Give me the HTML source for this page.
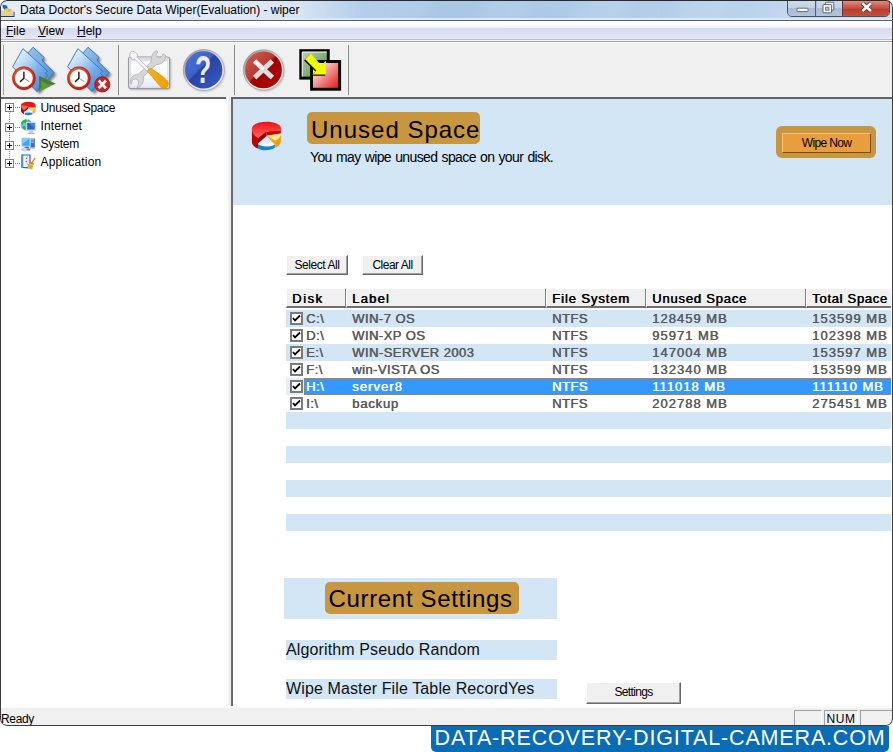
<!DOCTYPE html>
<html><head><meta charset="utf-8"><title>Data Doctor's Secure Data Wiper</title>
<style>
*{box-sizing:border-box;margin:0;padding:0}
html,body{width:893px;height:752px;overflow:hidden;background:#fff;font-family:"Liberation Sans",sans-serif;}
.abs{position:absolute}
#win{position:absolute;left:0;top:0;width:893px;height:726px;background:#f0f0f0;border-radius:7px 7px 7px 7px;overflow:hidden}
#frame{position:absolute;left:0;top:0;width:893px;height:726px;border:1px solid #3c3c3c;border-radius:7px;border-top-color:#2a2a2a;pointer-events:none;z-index:50}
#title{left:0;top:0;width:893px;height:20px;background:linear-gradient(#fff0 0,#fff0 18px,#dbe8f5 18px,#dbe8f5 20px),linear-gradient(90deg,#e4edf7 0,#dfe9f5 240px,#d6e4f3 300px,#b4cfeb 360px,rgba(180,207,235,0) 420px),repeating-linear-gradient(115deg,rgba(255,255,255,.08) 0 24px,rgba(255,255,255,0) 40px 70px,rgba(255,255,255,.08) 90px),linear-gradient(90deg,#aac9e7 0,#a9c8e6 55%,#b3cfea 75%,#c8dcf1 100%);}
#title .t{position:absolute;left:20px;letter-spacing:-.02px;top:3px;font-size:12px;color:#000;white-space:nowrap;line-height:14px}
#titleline{left:0;top:20px;width:893px;height:1px;background:#5a6068}
#menu{left:1px;top:21px;width:891px;height:20px;background:linear-gradient(#fff 0,#fff 14%,#eef1fa 34%,#d8dcf0 36%,#dbdff2 60%,#e6e8f7 89%,#b9bdd0 90%,#b9bdd0 95%,#f5f5f7 95%)}
#menu span{position:absolute;top:3px;font-size:12px;line-height:14px;color:#000}
#menu u{text-decoration:underline}
#menuline{left:1px;top:41px;width:891px;height:1px;background:#a0a0a0}
#tb{left:1px;top:42px;width:891px;height:55px;background:#f0f0f0;border-top:1px solid #fbfbfb}
#tbline{left:1px;top:97px;width:891px;height:2px;background:#646464;z-index:2}
#tree{left:1px;top:98px;width:225px;height:608px;background:#fff}
#split{z-index:3;left:226px;top:96px;width:5px;height:610px;background:linear-gradient(90deg,#f5f5f5 0 1px,#fff 1px 2px,#f0f0f0 2px)}
#rp{left:231px;top:98px;width:661px;height:608px;background:#fff;border-left:2px solid #6a6a6a}
#hdr{left:233px;top:99px;width:659px;height:106px;background:#d2e6f6}
.badge{background:#c99640;border-radius:5px;color:#000;font-size:24px;white-space:nowrap}
.tree-t{position:absolute;left:39.5px;font-size:12px;line-height:14px;color:#000;white-space:nowrap}
.btn{position:absolute;background:#f0f0f0;border:1px solid;border-color:#fff #696969 #696969 #fff;box-shadow:inset -1px -1px 0 #a0a0a0;font-size:11px;text-align:center;color:#000;white-space:nowrap}
.stripe{position:absolute;left:286px;width:605px;height:17px;background:#d2e6f6}
.row{position:absolute;left:286px;width:605px;height:17px;font-size:13px;font-weight:normal;text-shadow:.6px 0 0 currentColor;color:#5a5a5a;line-height:17px;letter-spacing:.45px;white-space:nowrap}
.row span{position:absolute;top:0}
.hc{position:absolute;top:289px;height:19px;background:#f0f0f0;border-left:1px solid #fff;border-right:1px solid #808080;border-bottom:2px solid #707070;font-size:13px;font-weight:normal;text-shadow:.6px 0 0 currentColor;color:#000;line-height:19px;letter-spacing:.9px;white-space:nowrap;padding-left:5px;overflow:hidden}
.cb{position:absolute;left:4px;top:2px;width:13px;height:13px;background:#fff;border:2px solid #7b7b7b;}
.cb svg{position:absolute;left:0;top:0}
.pm{position:absolute;left:4px;width:9px;height:9px;border:1px solid #808080;background:#fff}
.pm:before{content:"";position:absolute;left:1px;top:3px;width:5px;height:1px;background:#000}
.pm:after{content:"";position:absolute;left:3px;top:1px;width:1px;height:5px;background:#000}
.vd{position:absolute;left:8px;width:1px;background:repeating-linear-gradient(#808080 0 1px,transparent 1px 2px)}
.hd{position:absolute;left:14px;width:6px;height:1px;background:repeating-linear-gradient(90deg,#808080 0 1px,transparent 1px 2px)}
.lbl{position:absolute;left:286px;width:271px;height:20px;background:#d2e6f6;font-size:16px;line-height:20px;color:#111;letter-spacing:.12px;white-space:nowrap}
.sp{position:absolute;top:710px;height:16px;border:1px solid;border-color:#a0a0a0 #fff #fff #a0a0a0}
</style></head><body>
<div id="win">
<div id="title" class="abs"><span class="t">Data Doctor's Secure Data Wiper(Evaluation) - wiper</span></div>
<div id="titleline" class="abs"></div>
<div id="menu" class="abs"><span style="left:5px"><u>F</u>ile</span><span style="left:37px"><u>V</u>iew</span><span style="left:76px"><u>H</u>elp</span></div>
<div id="menuline" class="abs"></div>
<div id="tb" class="abs"></div>
<div id="tbline" class="abs"></div>
<div id="tree" class="abs">
  <div class="pm" style="top:5px"></div><div class="pm" style="top:25px"></div><div class="pm" style="top:43px"></div><div class="pm" style="top:61px"></div><div class="vd" style="top:15px;height:10px"></div><div class="vd" style="top:35px;height:8px"></div><div class="vd" style="top:53px;height:8px"></div><div class="hd" style="top:9px"></div><div class="hd" style="top:29px"></div><div class="hd" style="top:47px"></div><div class="hd" style="top:65px"></div>
  <div class="tree-t" style="top:3px;letter-spacing:-.35px">Unused Space</div>
  <div class="tree-t" style="top:21px;letter-spacing:.1px">Internet</div>
  <div class="tree-t" style="top:39px;letter-spacing:-.25px">System</div>
  <div class="tree-t" style="top:57px;letter-spacing:.2px">Application</div>
</div>
<div id="split" class="abs"></div>
<div id="rp" class="abs"></div>
<div id="hdr" class="abs"></div>
<div class="abs badge" style="left:307px;top:112px;width:173px;height:32px;line-height:35px;padding-left:4px;letter-spacing:1px">Unused Space</div>
<div class="abs" id="sub" style="left:310px;top:149px;font-size:14px;line-height:16px;white-space:nowrap;color:#000;letter-spacing:-.62px;word-spacing:.9px">You may wipe unused space on your disk.</div>
<div class="abs" style="left:776px;top:126px;width:100px;height:32px;border-radius:6px;background:#c99640"></div>
<div class="abs" id="wipenow" style="left:782px;top:133px;width:89px;height:20px;background:#e99d3c;border:1px solid;border-color:#f3c27a #7a4c10 #7a4c10 #f3c27a;font-size:12px;letter-spacing:-.64px;line-height:18px;text-align:center">Wipe Now</div>

<div class="btn" id="selall" style="left:286px;top:255px;width:62px;height:20px;line-height:18px;font-size:12px;letter-spacing:-.45px">Select All</div>
<div class="btn" id="clrall" style="left:362px;top:255px;width:61px;height:20px;line-height:18px;font-size:12px;letter-spacing:-.5px">Clear All</div>

<div class="abs" style="left:286px;top:288px;width:605px;height:1px;background:#fff"></div>
<div class="hc" style="left:286px;width:60px;letter-spacing:1.5px">Disk</div>
<div class="hc" style="left:346px;width:200px;letter-spacing:1.2px">Label</div>
<div class="hc" style="left:546px;width:100px">File System</div>
<div class="hc" style="left:646px;width:160px;letter-spacing:.8px">Unused Space</div>
<div class="hc" style="left:806px;width:85px;border-right:none;letter-spacing:.7px">Total Space</div>

<div class="stripe" style="top:310px"></div>
<div class="stripe" style="top:344px"></div>
<div class="stripe" style="top:378px;background:#e2eefa"></div><div class="abs" style="left:304px;top:378px;width:587px;height:17px;background:#3399ff;border:1px dotted #c8793a;border-right:none"></div>
<div class="stripe" style="top:412px"></div>
<div class="stripe" style="top:446px"></div>
<div class="stripe" style="top:480px"></div>
<div class="stripe" style="top:514px"></div>
<div class="row" style="top:310px"><i class="cb"><svg width="9" height="9" viewBox="0 0 9 9"><path d="M1 4 L3 6.5 L8 1.5" stroke="#000" stroke-width="1.8" fill="none"/></svg></i><span style="left:20px">C:\</span><span style="left:66px">WIN-7 OS</span><span style="left:266px">NTFS</span><span style="left:366px;letter-spacing:1px">128459 MB</span><span style="left:526px;letter-spacing:1px">153599 MB</span></div>
<div class="row" style="top:327px"><i class="cb"><svg width="9" height="9" viewBox="0 0 9 9"><path d="M1 4 L3 6.5 L8 1.5" stroke="#000" stroke-width="1.8" fill="none"/></svg></i><span style="left:20px">D:\</span><span style="left:66px">WIN-XP OS</span><span style="left:266px">NTFS</span><span style="left:366px;letter-spacing:1px">95971 MB</span><span style="left:526px;letter-spacing:1px">102398 MB</span></div>
<div class="row" style="top:344px"><i class="cb"><svg width="9" height="9" viewBox="0 0 9 9"><path d="M1 4 L3 6.5 L8 1.5" stroke="#000" stroke-width="1.8" fill="none"/></svg></i><span style="left:20px">E:\</span><span style="left:66px">WIN-SERVER 2003</span><span style="left:266px">NTFS</span><span style="left:366px;letter-spacing:1px">147004 MB</span><span style="left:526px;letter-spacing:1px">153597 MB</span></div>
<div class="row" style="top:361px"><i class="cb"><svg width="9" height="9" viewBox="0 0 9 9"><path d="M1 4 L3 6.5 L8 1.5" stroke="#000" stroke-width="1.8" fill="none"/></svg></i><span style="left:20px">F:\</span><span style="left:66px;letter-spacing:.45px">win-VISTA OS</span><span style="left:266px">NTFS</span><span style="left:366px;letter-spacing:1px">132340 MB</span><span style="left:526px;letter-spacing:1px">153599 MB</span></div>
<div class="row" style="top:378px;color:#fff"><i class="cb"><svg width="9" height="9" viewBox="0 0 9 9"><path d="M1 4 L3 6.5 L8 1.5" stroke="#000" stroke-width="1.8" fill="none"/></svg></i><span style="left:20px">H:\</span><span style="left:66px;letter-spacing:1.05px">server8</span><span style="left:266px">NTFS</span><span style="left:366px;letter-spacing:1px">111018 MB</span><span style="left:526px;letter-spacing:1px">111110 MB</span></div>
<div class="row" style="top:395px"><i class="cb"><svg width="9" height="9" viewBox="0 0 9 9"><path d="M1 4 L3 6.5 L8 1.5" stroke="#000" stroke-width="1.8" fill="none"/></svg></i><span style="left:20px">I:\</span><span style="left:66px;letter-spacing:.8px">backup</span><span style="left:266px">NTFS</span><span style="left:366px;letter-spacing:1px">202788 MB</span><span style="left:526px;letter-spacing:1px">275451 MB</span></div>
<div class="abs" style="left:284px;top:578px;width:273px;height:41px;background:#d2e6f6"></div>
<div class="abs badge" style="left:325px;top:582px;width:194px;height:32px;line-height:33px;padding-left:3.5px;letter-spacing:.67px">Current Settings</div>
<div class="lbl" id="l1" style="top:640px">Algorithm Pseudo Random</div>
<div class="lbl" id="l2" style="top:679px">Wipe Master File Table RecordYes</div>
<div class="btn" id="setbtn" style="left:586px;top:682px;width:95px;height:22px;line-height:18px;font-size:12px;letter-spacing:-.64px">Settings</div>

<div class="abs" style="left:1px;top:706px;width:891px;height:2px;background:#fafafa"></div>
<div class="abs" id="ready" style="left:1px;top:712px;font-size:12px;line-height:14px;letter-spacing:-.35px">Ready</div>
<div class="sp" style="left:794px;width:28px"></div>
<div class="sp" style="left:824px;width:34px;font-size:12px;line-height:17px;padding-left:1.5px;letter-spacing:.6px;overflow:visible;white-space:nowrap">NUM</div>
<div class="sp" style="left:860px;width:32px;border-right:none"></div>
<!--ICONS--><svg width="0" height="0" style="position:absolute"><defs>
<linearGradient id="gF" x1=".15" y1=".1" x2=".85" y2=".95"><stop offset="0" stop-color="#e4f2fd"/><stop offset=".3" stop-color="#b4d6f6"/><stop offset=".6" stop-color="#76b0ec"/><stop offset="1" stop-color="#4a8ad2"/></linearGradient>
<linearGradient id="gB" x1="0" y1="0" x2="1" y2="1"><stop offset="0" stop-color="#9cc6f0"/><stop offset=".5" stop-color="#6fa6e2"/><stop offset="1" stop-color="#4c86cc"/></linearGradient>
<radialGradient id="gRing" cx=".4" cy=".35" r=".7"><stop offset="0" stop-color="#ff7a4a"/><stop offset="1" stop-color="#c81e10"/></radialGradient>
<radialGradient id="gFace" cx=".5" cy=".5" r=".5"><stop offset="0" stop-color="#ffffff"/><stop offset=".8" stop-color="#ffffff"/><stop offset="1" stop-color="#e4e4e4"/></radialGradient>
<linearGradient id="gQ" x1="0" y1="0" x2="1" y2="1"><stop offset="0" stop-color="#4f74dc"/><stop offset=".42" stop-color="#3f60c8"/><stop offset=".46" stop-color="#2743a4"/><stop offset="1" stop-color="#3c5ec6"/></linearGradient>
<linearGradient id="gX" x1="0" y1="0" x2="1" y2="1"><stop offset="0" stop-color="#d86050"/><stop offset=".45" stop-color="#b83a34"/><stop offset=".5" stop-color="#a40000"/><stop offset="1" stop-color="#b00808"/></linearGradient>
<linearGradient id="gSil" x1="0" y1="0" x2="1" y2="1"><stop offset="0" stop-color="#8c8c8c"/><stop offset=".5" stop-color="#d8d8d8"/><stop offset="1" stop-color="#ffffff"/></linearGradient>
<linearGradient id="gGr" x1="0" y1="0" x2="1" y2="1"><stop offset="0" stop-color="#c4c8c4"/><stop offset=".5" stop-color="#86b078"/><stop offset="1" stop-color="#4c9428"/></linearGradient>
<linearGradient id="gRd" x1="0" y1="0" x2="1" y2="1"><stop offset="0" stop-color="#ffffff"/><stop offset=".4" stop-color="#f4a8a8"/><stop offset=".8" stop-color="#ea4848"/><stop offset="1" stop-color="#ff1010"/></linearGradient>
<linearGradient id="gWin" x1="0" y1="0" x2="0" y2="1"><stop offset="0" stop-color="#ffffff"/><stop offset=".6" stop-color="#f6f8fc"/><stop offset="1" stop-color="#e4e9f4"/></linearGradient>
<linearGradient id="gOr" x1="0" y1="0" x2="1" y2="0"><stop offset="0" stop-color="#f6b020"/><stop offset="1" stop-color="#f0a000"/></linearGradient>
<filter id="bl" x="-30%" y="-30%" width="160%" height="160%"><feGaussianBlur stdDeviation="1.1"/></filter>
</defs></svg>
<!-- toolbar icons -->
<svg class="abs" style="left:8px;top:44px" width="52" height="52" viewBox="0 0 52 52"><g>
  <path d="M6 24 L16 6 L21 10 L26 4.5 L37 14.5 L35 17.5 L47.5 29.5 L30.5 49 Z" fill="#333" opacity=".55" filter="url(#bl)" transform="translate(1.2,1.2)"/>
  <path d="M20 9 L25 3.2 L36.2 13.4 L34 16.4 L46.4 28.7 L36 40 Z" fill="url(#gB)" stroke="#3a6fb2" stroke-width=".9"/>
  <path d="M4.6 22.8 L14.9 4.6 L39.5 27 L37.5 29 L39.5 31.5 L29 47.6 Z" fill="url(#gF)" stroke="#3a6fb2" stroke-width=".9" stroke-linejoin="round"/>
  <circle cx="16.6" cy="35" r="11" fill="#555" opacity=".35" filter="url(#bl)"/>
  <circle cx="15.9" cy="34.2" r="10.2" fill="url(#gFace)" stroke="url(#gRing)" stroke-width="2.6"/>
  <circle cx="15.9" cy="34.2" r="11.4" fill="none" stroke="#a81808" stroke-width=".6"/>
  <path d="M15.9 34.4 L15.9 28.2 M15.9 34.2 L12.4 37.6" stroke="#111" stroke-width="1.4" fill="none" stroke-linecap="round"/>
  <path d="M15.9 34.2 L21.4 37.6" stroke="#e04040" stroke-width=".7"/>
</g>
  <path d="M31 32 L47.8 39.8 L31 47.8 Z" fill="#5c9a3c"/><path d="M31 32 L47.8 39.8 L40 40.5 L33 36.5 L33.5 43 L31 47.8 Z" fill="#44702c" opacity=".75"/>
</svg>
<svg class="abs" style="left:63px;top:44px" width="52" height="52" viewBox="0 0 52 52"><g>
  <path d="M6 24 L16 6 L21 10 L26 4.5 L37 14.5 L35 17.5 L47.5 29.5 L30.5 49 Z" fill="#333" opacity=".55" filter="url(#bl)" transform="translate(1.2,1.2)"/>
  <path d="M20 9 L25 3.2 L36.2 13.4 L34 16.4 L46.4 28.7 L36 40 Z" fill="url(#gB)" stroke="#3a6fb2" stroke-width=".9"/>
  <path d="M4.6 22.8 L14.9 4.6 L39.5 27 L37.5 29 L39.5 31.5 L29 47.6 Z" fill="url(#gF)" stroke="#3a6fb2" stroke-width=".9" stroke-linejoin="round"/>
  <circle cx="16.6" cy="35" r="11" fill="#555" opacity=".35" filter="url(#bl)"/>
  <circle cx="15.9" cy="34.2" r="10.2" fill="url(#gFace)" stroke="url(#gRing)" stroke-width="2.6"/>
  <circle cx="15.9" cy="34.2" r="11.4" fill="none" stroke="#a81808" stroke-width=".6"/>
  <path d="M15.9 34.4 L15.9 28.2 M15.9 34.2 L12.4 37.6" stroke="#111" stroke-width="1.4" fill="none" stroke-linecap="round"/>
  <path d="M15.9 34.2 L21.4 37.6" stroke="#e04040" stroke-width=".7"/>
</g>
  <circle cx="39.3" cy="40.4" r="7.6" fill="#c42424" stroke="#8c1010" stroke-width=".8"/>
  <path d="M35.6 36.6 L43 44.2 M43 36.6 L35.6 44.2" stroke="#f4f4f4" stroke-width="2.8"/>
</svg>
<svg class="abs" style="left:120px;top:44px" width="60" height="52" viewBox="0 0 60 52">
  <rect x="9.2" y="14" width="41.6" height="31.8" rx="2.5" fill="#777" opacity=".5" filter="url(#bl)"/>
  <rect x="8.6" y="13" width="41" height="31.6" rx="2.5" fill="url(#gWin)" stroke="#9a9a9a" stroke-width="1.2"/>
  <rect x="9.6" y="14" width="39" height="2.2" fill="#d6deee"/>
  <rect x="10.3" y="16.8" width="37.6" height="26.4" fill="none" stroke="#d3dbee" stroke-width="1"/>
  <!-- wrench -->
  <path d="M10.5 39.5 C9.5 34 13 30.5 18.5 30 L31 18 C31 12 33 8 36.5 6.5 L37.8 8 C35 11.5 36 13.5 39.5 13.5 C42 13.5 42.5 11.5 43 9.8 L45.5 11.5 C45.5 17 42 20.5 36 20.8 L23.5 32.5 C24 37.5 22 41.5 18.8 43.4 L17 43.4 C19.5 39 19 35.4 15.5 35 C12.5 34.8 11.6 37.2 11.6 40 Z" fill="#d6d6d6" stroke="#b0b0b0" stroke-width=".8"/>
  <!-- screwdriver -->
  <path d="M10.2 9 C10.6 7.4 12.6 6.6 14 7.6 L17.6 10.6 L17 13 L30 25.8 L27.8 28 L14.8 15.2 L12.6 15.6 L9.8 12 Z" fill="#f6f6f6" stroke="#b4b4b4" stroke-width=".8"/>
  <path d="M27.4 27.4 C28 25 30 24 31.5 24.6 C35 27.4 42 31.5 46.6 36 C49.2 38.6 48.8 41.8 46.6 43.6 C44.6 45 42 44.8 40.2 42.6 C36.5 37.5 32 32.5 27.4 27.4 Z" fill="url(#gOr)" stroke="#d88a00" stroke-width=".6"/>
</svg>
<svg class="abs" style="left:176px;top:44px" width="56" height="52" viewBox="0 0 56 52">
  <circle cx="28.6" cy="26.9" r="20.3" fill="#666" opacity=".5" filter="url(#bl)"/>
  <circle cx="27.7" cy="25.9" r="19.6" fill="url(#gQ)" stroke="url(#gSil)" stroke-width="1.8"/>
  <circle cx="27.7" cy="25.9" r="20.5" fill="none" stroke="#8a8a8a" stroke-width=".5"/>
  <text x="0" y="38.8" transform="translate(27.2,0) scale(.7,1)" font-family="Liberation Sans,sans-serif" font-weight="bold" font-size="38" fill="#ececec" text-anchor="middle">?</text>
</svg>
<svg class="abs" style="left:236px;top:44px" width="56" height="52" viewBox="0 0 56 52">
  <circle cx="28.4" cy="26.9" r="20" fill="#666" opacity=".5" filter="url(#bl)"/>
  <circle cx="27.5" cy="25.9" r="19.3" fill="url(#gX)" stroke="url(#gSil)" stroke-width="1.8"/>
  <circle cx="27.5" cy="25.9" r="20.2" fill="none" stroke="#8a8a8a" stroke-width=".5"/>
  <path d="M18.6 17 L36.4 33.6 M36.4 17 L18.6 33.6" stroke="#dcdcdc" stroke-width="5" />
  <path d="M18.6 17 L27.5 25.3" stroke="#f8f8f8" stroke-width="3"/>
</svg>
<svg class="abs" style="left:292px;top:44px" width="56" height="52" viewBox="0 0 56 52">
  <rect x="7.3" y="5.2" width="30.4" height="30.4" fill="#000"/>
  <rect x="10.2" y="8" width="24.6" height="24.6" fill="url(#gGr)"/>
  <path d="M10.2 32.6 V8 H34.8" fill="none" stroke="#fff" stroke-width="1"/>
  <rect x="18.1" y="16" width="31" height="30.7" fill="#000"/>
  <rect x="21" y="19" width="25.2" height="24.8" fill="url(#gRd)"/>
  <path d="M12.6 15.6 L18.6 9.8 L29.2 21.4 L33.9 16.9 V31 H19.6 L24 26.8 Z" fill="#111" transform="translate(-.6,.8)"/>
  <path d="M13.2 15.2 L18.8 9.8 L29.2 21.2 L33.9 16.9 V30.4 H20.4 L24.4 26.6 Z" fill="#f0ff00"/>
</svg>
<!-- toolbar separators/grip -->
<div class="abs" style="left:3px;top:45px;width:1px;height:50px;background:#a0a0a0"></div>
<div class="abs" style="left:118px;top:45px;width:1px;height:50px;background:#8c8c8c"></div>
<div class="abs" style="left:234px;top:45px;width:1px;height:50px;background:#8c8c8c"></div>
<div class="abs" style="left:348px;top:45px;width:1px;height:50px;background:#8c8c8c"></div>
<!-- pie icon -->
<svg class="abs" style="left:240px;top:110px" width="52" height="52" viewBox="0 0 52 52">
  <defs><linearGradient id="gPt" x1="0" y1="0" x2="0" y2="1"><stop offset="0" stop-color="#ee1010"/><stop offset=".5" stop-color="#fa3a3a"/><stop offset="1" stop-color="#ee6a6a"/></linearGradient>
  <linearGradient id="gPy" x1="0" y1="0" x2="1" y2="1"><stop offset="0" stop-color="#f4c010"/><stop offset=".6" stop-color="#fff6a0"/><stop offset="1" stop-color="#f4c818"/></linearGradient>
  <linearGradient id="gPb" x1="0" y1="0" x2="0" y2="1"><stop offset="0" stop-color="#bfe4f6"/><stop offset="1" stop-color="#ffffff"/></linearGradient></defs>
  <path d="M11.9 18 V33 C13 36 15.5 37.6 18 38.6 V28 L26.4 21.6 Z" fill="#c00404"/>
  <path d="M18 27.8 L26.6 21.2 V26 L18 33.6 Z" fill="#9c0000"/>
  <path d="M26.5 21.8 L40.9 18.6 V23.6 L26.5 25.8 Z" fill="#c40808"/>
  <path d="M11.9 18.6 C11.9 9.5 41 9.5 41 18.6 C41 20 40.8 20.6 40.6 21 L26.6 21.4 L18 27.9 C14 26.4 11.9 22 11.9 18.6 Z" fill="url(#gPt)"/>
  <path d="M26.6 25.7 L40.9 23.6 C41 27 39 29.5 35.2 30.6 Z" fill="url(#gPy)"/>
  <path d="M35.2 30.6 C39 29.5 41 27 40.9 23.6 V31 C40.6 34 38.6 36.4 35.2 37.8 Z" fill="#f29a10"/>
  <path d="M26.6 25.7 L35.2 30.6 V37.8 L34.6 34.4 Z" fill="#f0a818"/>
  <path d="M18 34 C22 37 31 37 34.9 34.5 V37.6 C31 41 22 41 18 38.4 Z" fill="#1a86c8"/>
  <path d="M26.6 27.6 L34.9 34.5 C31 37 22 37 18 34 Z" fill="url(#gPb)"/>
</svg>
<!--/ICONS--><!--CAP--><!-- title icon -->
<svg class="abs" style="left:0;top:3px" width="17" height="16" viewBox="0 0 17 16">
  <path d="M1 7.6 H13.4 L14.4 9 V13.4 H1 Z" fill="#d0d0d0"/>
  <path d="M1 13 H14.4 V14 H1 Z" fill="#3a3a3a"/>
  <path d="M13.6 8.4 L14.6 9.6 V13.4 H13.6 Z" fill="#555"/>
  <path d="M5.6 4.4 L12 6.8 L6.4 12.9 L3.8 9 Z" fill="#f2d840"/>
  <path d="M8.6 5.6 L11.6 6.8 L9.2 9.6 L7.4 7.6 Z" fill="#f6b060"/>
  <path d="M2.6 1.8 L6.6 2.4 L7.8 4.4 L4 6.2 L2.8 4.4 Z" fill="#1f5cc4"/>
  <path d="M4 6.2 L7.8 4.4 L8.4 5.2 L4.4 7.2 Z" fill="#7aa0d8"/>
</svg>
<!-- caption buttons -->
<div class="abs" style="left:787px;top:-1px;width:103px;height:18px;border:1px solid #46525e;border-radius:0 0 5px 5px;overflow:hidden;background:#aabdd4">
  <div class="abs" style="left:0;top:0;width:28px;height:17px;background:linear-gradient(#cfdcea 0,#c2d1e3 47%,#a9bcd3 50%,#b3c5da 100%);border-right:1px solid #4f5d6c"></div>
  <div class="abs" style="left:29px;top:0;width:26px;height:17px;background:linear-gradient(#cfdcea 0,#c2d1e3 47%,#a9bcd3 50%,#b3c5da 100%);border-right:1px solid #6a3630"></div>
  <div class="abs" style="left:55px;top:0;width:47px;height:17px;background:linear-gradient(#e0988c 0,#d2685a 30%,#c44a3c 50%,#b93d2e 55%,#c65440 100%)"></div>
  <svg class="abs" style="left:0;top:0" width="102" height="17" viewBox="0 0 102 17">
    <rect x="9" y="8.2" width="11" height="3.4" rx=".8" fill="#fff" stroke="#56606c" stroke-width=".9"/>
    <rect x="37.4" y="2.2" width="8.4" height="8" rx=".8" fill="#e8eef5" stroke="#56606c" stroke-width=".9"/>
    <rect x="35" y="4.6" width="8.6" height="8.2" rx=".8" fill="#fff" stroke="#4c5662" stroke-width=".9"/>
    <rect x="37.6" y="7.2" width="3.4" height="3" fill="#b9c8da" stroke="#56606c" stroke-width=".8"/>
    <path d="M74.4 3.2 L83 11 M83 3.2 L74.4 11" stroke="#5a2a24" stroke-width="4.2"/>
    <path d="M74.4 3.2 L83 11 M83 3.2 L74.4 11" stroke="#fff" stroke-width="2.6"/>
  </svg>
</div>
<!--/CAP--><!--TREEICONS--><!-- tree icons -->
<svg class="abs" style="left:20px;top:100px" width="17" height="17" viewBox="0 0 17 17">
  <path d="M1 5.5 C1 .6 15.6 .6 15.6 5.5 L15.6 8 L8.4 7.4 L4 10.6 L4 14 C2 13 1 12 1 10.6 Z" fill="#e81818"/>
  <path d="M1 7 V10.6 C1 12 2 13 4 14 V10.6 Z" fill="#c00808"/>
  <path d="M1.4 5.6 C3 4.6 6 6.8 8.6 6.2 L4 10 C2.4 9 1.4 7.6 1.4 5.6 Z" fill="#f26a6a"/>
  <path d="M4 10.6 L8.4 7.2 V8.4 L4.6 12 Z" fill="#9a0000"/>
  <path d="M8.6 7.8 L15.6 7.2 V11 C15.4 12.4 14.4 13.4 12.8 14 L12.6 11.4 Z" fill="#f6b010"/>
  <path d="M9.4 8 L15 7.6 C14.8 9.4 14 10.2 12.6 10.8 Z" fill="#fde070"/>
  <path d="M8.4 9.4 L12.4 12.6 C10 11.8 6.8 11.8 4.6 12.6 Z" fill="#d8effa"/>
  <path d="M4.6 12.6 C7 11.8 10 11.8 12.4 12.6 V14.2 C10 15.4 6.6 15.4 4.6 14.4 Z" fill="#1886c6"/>
  <path d="M4.6 12.6 C7 11.9 10 11.9 12.4 12.6 L12.4 13.1 C10 12.4 7 12.4 4.6 13.2 Z" fill="#f4fbff"/>
</svg>
<svg class="abs" style="left:20px;top:118px" width="17" height="17" viewBox="0 0 17 17">
  <circle cx="6.2" cy="6.8" r="5.6" fill="#7db4ee"/>
  <path d="M2 3.4 C3.4 1.8 5 1.4 6.4 1.6 L7.4 3.2 L5.4 5 L3.6 4.8 L2.6 6.4 L1 6 C1 5 1.4 4 2 3.4 Z M2.2 8.2 L4.8 8 L6.2 10 L5 12.2 C3.6 11.6 2.6 10 2.2 8.2 Z M8 1.6 C9.4 2 10.4 2.8 11 3.8 L9 4.4 Z" fill="#22c23e"/>
  <path d="M6.4 4.2 H15.4 V12.4 H6.4 Z" fill="#a8d0f4" stroke="#d0d8e4" stroke-width=".8"/>
  <path d="M7.2 5 H14.6 V11.6 H7.2 Z" fill="#2a62d0"/>
  <path d="M9 5 H14.6 V10.6 Z" fill="#3a8ce0"/>
  <path d="M9.4 12.8 H12.6 L13.6 15 H8.4 Z" fill="#c8ccd2"/>
  <path d="M7.4 15 H14.6 V16 H7.4 Z" fill="#b0b4ba"/>
</svg>
<svg class="abs" style="left:20px;top:136px" width="17" height="17" viewBox="0 0 17 17">
  <path d="M10.4 2.4 H14.8 V11.6 H10.4 Z" fill="#3a6ad4"/>
  <path d="M11 3.4 H14 M11 5 H14 M11 6.6 H14" stroke="#a9c6f2" stroke-width=".8"/>
  <path d="M10.2 11.6 H15 V12.6 H10.2 Z" fill="#9aa0aa"/>
  <path d="M1.8 2 H10.2 V10.6 H1.8 Z" fill="#8ed0f8" stroke="#c4d4e8" stroke-width=".8"/>
  <path d="M2.6 2.8 H9.4 V9.8 H2.6 Z" fill="#38a8f4"/>
  <path d="M2.6 2.8 H9.4 L2.6 8 Z" fill="#7cd0fc"/>
  <path d="M5 10.8 H8.6 L9.6 12.6 H4 Z" fill="#3a66c8"/>
  <ellipse cx="4.4" cy="13.4" rx="3" ry="1.6" fill="#d8dade" stroke="#aeb2b8" stroke-width=".5"/>
  <path d="M7 12.8 H10.6 L10 14.6 H6.8 Z" fill="#6a88cc"/>
</svg>
<svg class="abs" style="left:20px;top:153px" width="17" height="18" viewBox="0 0 17 18">
  <path d="M1.4 1.4 L10.6 1.6 V15.4 L1.4 15 Z" fill="#1c64d4"/>
  <path d="M1.4 1.4 L3 1.4 V15 H1.4 Z" fill="#4a94ec"/>
  <path d="M3.2 2.6 H9.4 V14 H3.2 Z" fill="#f4f8fc"/>
  <path d="M5.4 5.4 L7 4.2 L7.4 6 Z M5.2 8.8 L7 7.6 L7.2 9.6 Z M6.2 11 l1.2 -.6 l.2 1.4 Z" fill="#e03030"/>
  <path d="M7.4 3.4 l.6 .8 M7.6 6.8 l.6 .8" stroke="#e88a20" stroke-width=".8"/>
  <path d="M14.6 4.6 L15.6 5.4 L12.6 10 L11.4 9.2 Z" fill="#d48a28"/>
  <path d="M10.2 8.6 L14 10.6 L13.4 12 L9.4 10 Z" fill="#e07a18"/>
  <path d="M9.2 10 L13.4 12.2 L12.2 16.4 L10.4 16.6 L7.2 14 Z" fill="#e8c048"/>
  <path d="M8.8 11.6 L12.8 13.8 M8 13 L12.2 15.4" stroke="#c08820" stroke-width=".6"/>
</svg>
<!--/TREEICONS--><div id="frame"></div>
</div>
<div class="abs" id="banner" style="left:431px;top:726px;width:458px;height:26px;background:#0a6cb4;border-radius:0 0 5px 5px;color:#fff;font-size:21.5px;letter-spacing:.84px;line-height:25px;white-space:nowrap;padding-left:3.6px"><span id="bt" style="display:inline-block;transform-origin:0 50%">DATA-RECOVERY-DIGITAL-CAMERA.COM</span></div>
</body></html>
